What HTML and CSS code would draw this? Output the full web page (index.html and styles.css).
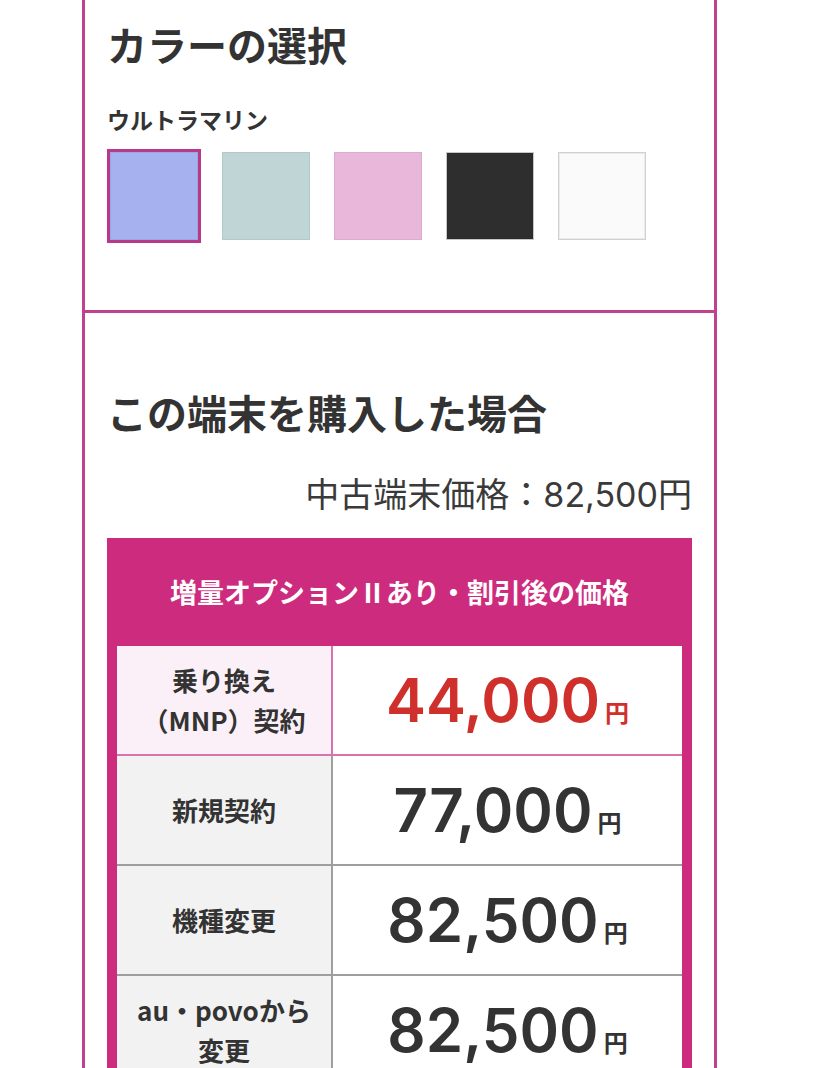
FILE: index.html
```html
<!DOCTYPE html>
<html lang="ja">

<head>
    <meta charset="UTF-8">
    <meta name="viewport" content="width=device-width, initial-scale=1.0">
    <title>カラーの選択 / 購入価格</title>
    <link rel="stylesheet" href="styles.css">
</head>

<body>

    <div class="panel">
        <section class="panel-section">
            <h2 class="section-title">カラーの選択</h2>
            <p class="color-name">ウルトラマリン</p>

            <ul class="swatches">
                <li class="swatch swatch--ultramarine is-selected" title="ウルトラマリン"></li>
                <li class="swatch swatch--mint" title="ミント"></li>
                <li class="swatch swatch--pink" title="ピンク"></li>
                <li class="swatch swatch--black" title="ブラック"></li>
                <li class="swatch swatch--white" title="ホワイト"></li>
            </ul>
        </section>

        <section class="panel-section">
            <h2 class="section-title">この端末を購入した場合</h2>
            <p class="used-price">中古端末価格：<span class="num">82,500</span>円</p>

            <div class="price-box">
                <h3 class="price-box-title">増量オプションⅡあり・割引後の価格</h3>

                <table class="price-table">
                    <tr class="is-featured">
                        <th>乗り換え<br>（MNP）契約</th>
                        <td><span class="amount">44,000</span><span class="yen">円</span></td>
                    </tr>
                    <tr>
                        <th>新規契約</th>
                        <td><span class="amount">77,000</span><span class="yen">円</span></td>
                    </tr>
                    <tr>
                        <th>機種変更</th>
                        <td><span class="amount">82,500</span><span class="yen">円</span></td>
                    </tr>
                    <tr>
                        <th>au・povoから<br>変更</th>
                        <td><span class="amount">82,500</span><span class="yen">円</span></td>
                    </tr>
                </table>
            </div>
        </section>
    </div>

</body>

</html>
```

FILE: styles.css
```css
/* --- Page --- */
body {
    margin: 0;
    background: #ffffff;
    color: #333333;
    font-family: "Noto Sans CJK JP", sans-serif;
}

/* --- Outer panel, sections split by a magenta rule --- */
.panel {
    width: 635px;
    margin-left: 82px;
    box-sizing: border-box;
    border: 3px solid #c0428e;
    border-top: none;
}

.panel-section {
    padding: 20px 22px 70px;
}

.panel-section + .panel-section {
    border-top: 3px solid #c0428e;
    padding-top: 75px;
}

.section-title {
    margin: 0;
    font-size: 40px;
    font-weight: 700;
    line-height: 48px;
}

/* --- Colour picker --- */
.color-name {
    margin: 36px 0 0;
    font-size: 23px;
    font-weight: 700;
    line-height: 30px;
}

.swatches {
    list-style: none;
    display: flex;
    gap: 24px;
    margin: 18px 0 0;
    padding: 0 0 0 3px;
}

.swatch {
    width: 88px;
    height: 88px;
    box-sizing: border-box;
    box-shadow: inset 0 0 0 1px rgba(0, 0, 0, 0.06);
}

.swatch--ultramarine { background: #a6b2f0; }
.swatch--mint { background: #bfd5d6; }
.swatch--pink { background: #e8b7da; }
.swatch--black { background: #2e2e2e; border: 1px solid #c8c8c8; }
.swatch--white { background: #fafafa; border: 1px solid #d0d0d0; }

.swatch.is-selected {
    outline: 3px solid #b8398a;
}

/* --- Purchase price --- */
.used-price {
    margin: 36px 0 0;
    text-align: right;
    font-size: 34px;
    line-height: 42px;
    font-weight: 400;
    color: #3a3a3a;
}

.used-price .num {
    font-family: "Inter", sans-serif;
    font-weight: 400;
}

.price-box {
    margin-top: 22px;
    padding: 0 10px;
    background: #cd2c7e;
}

.price-box-title {
    margin: 0;
    height: 108px;
    line-height: 108px;
    text-align: center;
    color: #ffffff;
    font-size: 27px;
    font-weight: 700;
}

.price-table {
    width: 100%;
    border-collapse: separate;
    border-spacing: 0;
}

.price-table th,
.price-table td {
    height: 108px;
    padding: 0;
    border-bottom: 2px solid #9e9e9e;
    vertical-align: middle;
    text-align: center;
}

.price-table th {
    width: 214px;
    border-right: 2px solid #9e9e9e;
    background: #f2f2f2;
    font-size: 26px;
    font-weight: 700;
    line-height: 40px;
}

.price-table td {
    background: #ffffff;
}

.amount {
    font-family: "Inter", sans-serif;
    font-size: 60px;
    font-weight: 600;
}

.yen {
    margin-left: 5px;
    font-size: 24px;
    font-weight: 700;
}

/* first row: highlighted MNP price */
.price-table .is-featured th,
.price-table .is-featured td {
    border-color: #d873ae;
}

.price-table .is-featured th {
    background: #fcf0f8;
}

.price-table .is-featured td {
    color: #d0302b;
}
```
